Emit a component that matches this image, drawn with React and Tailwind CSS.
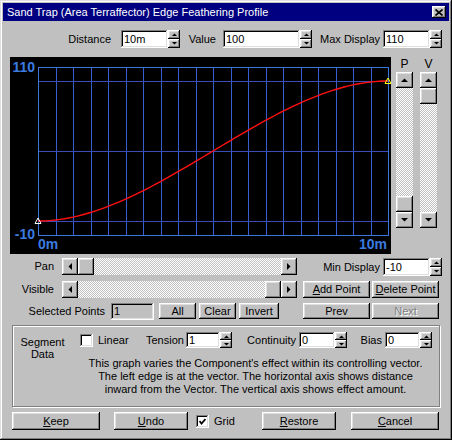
const raised = 'bg-[#c0c0c0] shadow-[inset_-1px_-1px_#000,inset_1px_1px_#fff,inset_-2px_-2px_#808080,inset_2px_2px_#dfdfdf]'
const sunken = 'shadow-[inset_-1px_-1px_#fff,inset_1px_1px_#808080,inset_-2px_-2px_#dfdfdf,inset_2px_2px_#000]'
const track = 'bg-[image:repeating-conic-gradient(#c0c0c0_0_25%,#fff_0_50%)] bg-[length:2px_2px]'

function Arrow({ dir, small }) {
  const pts = small
    ? { up: '0,3 5,3 2.5,0.5', down: '0,0 5,0 2.5,2.5' }
    : { up: '0,4 7,4 3.5,0.5', down: '0,0 7,0 3.5,3.5', left: '4,0 4,7 0.5,3.5', right: '0,0 0,7 3.5,3.5' }
  const size = small ? [5, 3] : dir === 'left' || dir === 'right' ? [4, 7] : [7, 4]
  return (
    <svg width={size[0]} height={size[1]} className="block">
      <polygon points={pts[dir]} fill="#000" />
    </svg>
  )
}

function Spin({ className = '', value, h = 'h-[18px]' }) {
  return (
    <div className={`flex ${h} ${className}`}>
      <div className={`flex flex-1 items-center bg-white pl-[3px] ${sunken}`}>{value}</div>
      <div className="flex w-[12px] flex-col">
        <div className={`${raised} flex flex-1 items-center justify-center`}><Arrow dir="up" small /></div>
        <div className={`${raised} flex flex-1 items-center justify-center`}><Arrow dir="down" small /></div>
      </div>
    </div>
  )
}

function Btn({ className = '', children, disabled }) {
  return (
    <button type="button" className={`${raised} flex items-center justify-center ${disabled ? 'text-[#808080] [text-shadow:1px_1px_0_#fff]' : ''} ${className}`}>
      {children}
    </button>
  )
}

function HScroll({ end }) {
  return (
    <div className="flex h-[17px] w-[235px]">
      <div className={`${raised} flex w-[16px] items-center justify-center`}><Arrow dir="left" /></div>
      <div className={`flex flex-1 ${track} ${end ? 'justify-end' : ''}`}>
        <div className={`${raised} w-[16px]`} />
      </div>
      <div className={`${raised} flex w-[16px] items-center justify-center`}><Arrow dir="right" /></div>
    </div>
  )
}

function VScroll({ label, end, className = '' }) {
  return (
    <div className={`flex w-[17px] flex-col ${className}`}>
      <div className="h-[15px] text-center text-[12px] leading-[15px]">{label}</div>
      <div className="flex h-[156px] flex-col">
        <div className={`${raised} flex h-[16px] items-center justify-center`}><Arrow dir="up" /></div>
        <div className={`flex flex-1 flex-col ${track} ${end ? 'justify-end' : ''}`}>
          <div className={`${raised} h-[16px]`} />
        </div>
        <div className={`${raised} flex h-[16px] items-center justify-center`}><Arrow dir="down" /></div>
      </div>
    </div>
  )
}

function Check({ checked, className = '' }) {
  return (
    <div className={`flex h-[13px] w-[13px] items-center justify-center bg-white ${sunken} ${className}`}>
      {checked && (
        <svg width="7" height="7" className="block">
          <polyline points="0.5,3 2.5,5.5 6.5,1" fill="none" stroke="#000" strokeWidth="1.8" />
        </svg>
      )}
    </div>
  )
}

function Graph() {
  const L = 28, T = 10, R = 378, B = 178
  const yOf = v => T + (110 - v) * 1.4
  const curve = Array.from({ length: 81 }, (_, i) => {
    const t = i / 80
    return `${L + t * 350},${yOf((3 * t * t - 2 * t * t * t) * 100)}`
  }).join(' ')
  const vx = Array.from({ length: 19 }, (_, i) => L + Math.round(17.5 * (i + 1)) + 0.5)
  return (
    <svg width="381" height="197" className="block bg-black">
      <g shapeRendering="crispEdges">
        {vx.map(x => <line key={x} x1={x} y1={T} x2={x} y2={B} stroke="#3a5ed0" />)}
        {[100, 50, 0].map(v => <line key={v} x1={L} y1={Math.round(yOf(v)) + 0.5} x2={R} y2={Math.round(yOf(v)) + 0.5} stroke="#3a4cb8" />)}
        <rect x={L + 0.5} y={T + 0.5} width={R - L} height={B - T} fill="none" stroke="#3b78dc" />
      </g>
      <polyline points={curve} fill="none" stroke="#ff1010" strokeWidth="1.4" />
      <polygon points={`${L - 3},${yOf(0) + 2.5} ${L + 3},${yOf(0) + 2.5} ${L},${yOf(0) - 3}`} fill="none" stroke="#fff" />
      <polygon points={`${R - 3},${yOf(100) + 2.5} ${R + 3},${yOf(100) + 2.5} ${R},${yOf(100) - 3}`} fill="none" stroke="#ffff00" />
      <g fill="#3b7be0" fontFamily="'Liberation Sans', Arial, sans-serif" fontWeight="bold" fontSize="14">
        <text x="25" y="15" textAnchor="end">110</text>
        <text x="25" y="182" textAnchor="end">-10</text>
        <text x="28" y="192">0m</text>
        <text x="377" y="192" textAnchor="end">10m</text>
      </g>
    </svg>
  )
}

export default function App() {
  return (
    <div className="flex h-[440px] w-[452px] flex-col bg-[#c0c0c0] p-[3px] font-['Liberation_Sans',Arial,sans-serif] text-[11px] leading-none text-black shadow-[inset_-1px_-1px_#000,inset_1px_1px_#dfdfdf,inset_-2px_-2px_#808080,inset_2px_2px_#fff]">
      {/* title bar */}
      <div className="flex h-[18px] items-center bg-[#000080] pl-[4px] pr-[3px] text-white">
        <span className="flex-1 text-[11px]">Sand Trap (Area Terraffector) Edge Feathering Profile</span>
        <div className={`${raised} flex h-[12px] w-[14px] items-center justify-center`}>
          <svg width="8" height="7" className="block">
            <path d="M0.5 0.5 L7.5 6.5 M7.5 0.5 L0.5 6.5" stroke="#000" strokeWidth="1.6" />
          </svg>
        </div>
      </div>

      {/* distance / value row */}
      <div className="mt-[9px] flex h-[18px] items-center">
        <span className="w-[108px] text-right">Distance</span>
        <Spin className="ml-[10px] w-[59px]" value="10m" />
        <span className="w-[36px] text-right">Value</span>
        <Spin className="ml-[7px] w-[89px]" value="100" />
        <span className="w-[68px] whitespace-nowrap text-right">Max Display</span>
        <Spin className="ml-[3px] w-[59px]" value="110" />
      </div>

      {/* graph + P/V */}
      <div className="mt-[9px] flex">
        <div className="ml-[7px]"><Graph /></div>
        <VScroll label="P" end className="ml-[5px]" />
        <VScroll label="V" className="ml-[7px]" />
      </div>

      {/* pan row */}
      <div className="mt-[4px] flex h-[18px] items-start">
        <span className="w-[51px] text-right leading-[17px]">Pan</span>
        <div className="ml-[8px]"><HScroll /></div>
        <span className="w-[83px] whitespace-nowrap text-right leading-[18px]">Min Display</span>
        <Spin className="ml-[3px] w-[59px]" value="-10" />
      </div>

      {/* visible row */}
      <div className="mt-[5px] flex h-[17px] items-center">
        <span className="w-[51px] text-right">Visible</span>
        <div className="ml-[8px]"><HScroll end /></div>
        <Btn className="ml-[6px] h-[17px] w-[67px]"><span className="underline">A</span>dd Point</Btn>
        <Btn className="ml-[2px] h-[17px] w-[67px]"><span className="underline">D</span>elete Point</Btn>
      </div>

      {/* selected points row */}
      <div className="mt-[5px] flex h-[17px] items-start">
        <span className="w-[102px] whitespace-nowrap text-right leading-[17px]">Selected Points</span>
        <div className={`ml-[6px] flex h-[17px] w-[43px] items-center pl-[3px] ${sunken}`}>1</div>
        <Btn className="ml-[5px] h-[16px] w-[37px]">All</Btn>
        <Btn className="ml-[3px] h-[16px] w-[37px]">Clear</Btn>
        <Btn className="ml-[3px] h-[16px] w-[40px]">Invert</Btn>
        <Btn className="ml-[24px] h-[16px] w-[67px]">Prev</Btn>
        <Btn className="ml-[2px] h-[16px] w-[67px]" disabled>Next</Btn>
      </div>

      {/* segment data group */}
      <div className="ml-[9px] mt-[5px] flex h-[82px] w-[428px] border border-[#808080] shadow-[inset_1px_1px_#fff,1px_1px_#fff]">
        <div className="w-[59px] pt-[10px] text-center leading-[12px]">
          Segment<br />Data
        </div>
        <div className="flex flex-1 flex-col pt-[6px]">
          <div className="flex h-[16px] items-center">
            <Check className="ml-[8px]" />
            <span className="ml-[5px] w-[48px]">Linear</span>
            <span className="w-[37px] whitespace-nowrap text-right">Tension</span>
            <Spin className="ml-[3px] w-[46px]" h="h-[16px]" value="1" />
            <span className="w-[64px] text-right">Continuity</span>
            <Spin className="ml-[3px] w-[48px]" h="h-[16px]" value="0" />
            <span className="w-[35px] text-right">Bias</span>
            <Spin className="ml-[3px] w-[47px]" h="h-[16px]" value="0" />
          </div>
          <p className="mt-[9px] text-center leading-[13px]">
            This graph varies the Component's effect within its controlling vector.<br />
            The left edge is at the vector. The horizontal axis shows distance<br />
            inward from the Vector. The vertical axis shows effect amount.
          </p>
        </div>
      </div>

      {/* bottom buttons */}
      <div className="mt-[5px] flex h-[18px] items-center">
        <Btn className="ml-[9px] h-[18px] w-[88px]"><span className="underline">K</span>eep</Btn>
        <Btn className="ml-[14px] h-[18px] w-[74px]"><span className="underline">U</span>ndo</Btn>
        <Check checked className="ml-[8px]" />
        <span className="ml-[5px] w-[48px]">Grid</span>
        <Btn className="h-[18px] w-[74px]"><span className="underline">R</span>estore</Btn>
        <Btn className="ml-[15px] h-[18px] w-[88px]"><span className="underline">C</span>ancel</Btn>
      </div>
    </div>
  )
}
